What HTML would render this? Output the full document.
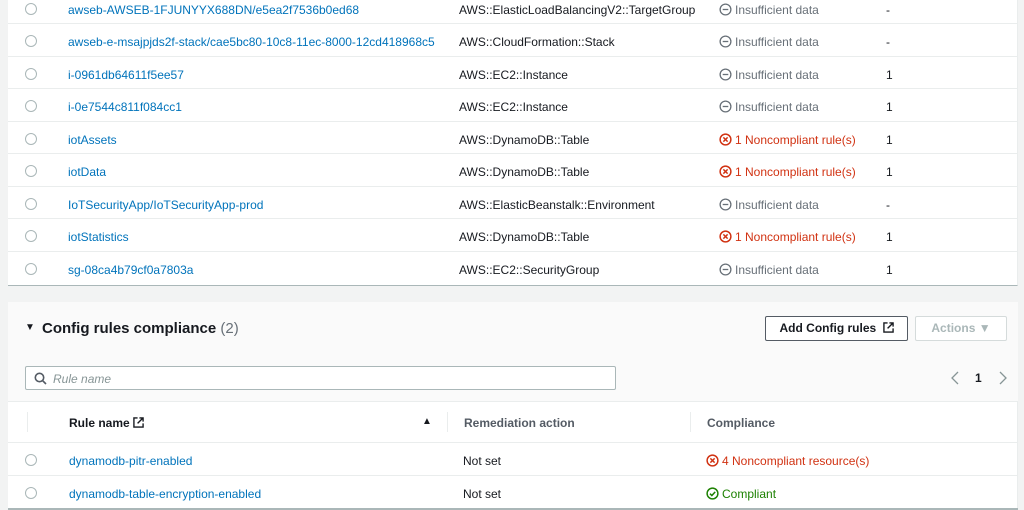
<!DOCTYPE html>
<html><head><meta charset="utf-8"><style>
*{box-sizing:border-box;margin:0;padding:0}
body{width:1024px;height:510px;overflow:hidden;background:#f2f3f3;font-family:"Liberation Sans",sans-serif;font-size:12px;color:#16191f;position:relative}
.p1{position:absolute;left:8px;top:-10px;width:1010px;height:296px;background:#fff;border-bottom:1px solid #aab7b8;border-right:1px solid #eaeded}
.row{position:absolute;left:0;width:1010px;height:32.5px;border-bottom:1px solid #eaeded}
.t{position:absolute;white-space:nowrap;line-height:14px}
.radio{position:absolute;width:12px;height:12px;border:1px solid #aab7b8;border-radius:50%;background:#fff}
.lk{color:#0073bb}
.gray{color:#687078}
.red{color:#d13212}
.green{color:#1d8102}
svg.i{width:13px;height:13px;vertical-align:-2px;margin-right:3px}
.p2{position:absolute;left:8px;top:302px;width:1010px;height:208px;background:#fff;border-right:1px solid #eaeded}
.hd{position:absolute;left:0;top:0;width:1010px;height:100px;background:#fafafa;border-bottom:1px solid #eaeded}
.btn{position:absolute;height:25px;border:1px solid #545b64;border-radius:2px;font-weight:bold;font-size:12px;text-align:center;line-height:23px;background:#fff}
</style></head><body>
<div class="p1"><div id="rows"></div></div>
<div class="p2">
<div class="hd">
<div class="t" style="left:17px;top:19px;font-size:10px">▼</div>
<div class="t" style="left:34px;top:18px;font-size:15px;font-weight:bold;line-height:18px">Config rules compliance <span style="font-weight:normal;color:#687078">(2)</span></div>
<div class="btn" style="left:757px;top:14px;width:143px;color:#16191f">Add Config rules <svg style="width:11px;height:11px;vertical-align:-1px;margin-left:3px" viewBox="0 0 12 12" fill="none" stroke="#16191f" stroke-width="1.5"><path d="M5 1H1v10h10V7M7 1h4v4M11 1L5 7"/></svg></div>
<div class="btn" style="left:907px;top:14px;width:92px;border-color:#d5dbdb;color:#aab7b8">Actions ▼</div>
<div style="position:absolute;left:17px;top:64px;width:591px;height:24px;border:1px solid #aab7b8;border-radius:2px;background:#fff">
<svg style="position:absolute;left:8px;top:5px;width:13px;height:13px" viewBox="0 0 13 13" fill="none" stroke="#545b64" stroke-width="1.6"><circle cx="5.5" cy="5.5" r="4.2"/><path d="M8.5 8.5L12 12"/></svg>
<div class="t" style="left:27px;top:5px;font-style:italic;color:#879596">Rule name</div></div>
<svg style="position:absolute;left:943px;top:69px;width:8px;height:14px" viewBox="0 0 8 14" fill="none" stroke="#879596" stroke-width="1.3"><path d="M7 1L1 7l6 6"/></svg>
<div class="t" style="left:967px;top:69px;font-weight:bold">1</div>
<svg style="position:absolute;left:991px;top:69px;width:8px;height:14px" viewBox="0 0 8 14" fill="none" stroke="#879596" stroke-width="1.3"><path d="M1 1l6 6-6 6"/></svg>
</div>
<div style="position:absolute;left:0;top:100px;width:1010px;height:41px;border-bottom:1px solid #eaeded">
<div style="position:absolute;left:19px;top:10px;width:1px;height:20px;background:#eaeded"></div>
<div style="position:absolute;left:439px;top:10px;width:1px;height:20px;background:#eaeded"></div>
<div style="position:absolute;left:682px;top:10px;width:1px;height:20px;background:#eaeded"></div>
<div class="t" style="left:61px;top:14px;font-weight:bold">Rule name <svg style="width:11px;height:11px;vertical-align:-1px" viewBox="0 0 12 12" fill="none" stroke="#16191f" stroke-width="1.5"><path d="M5 1H1v10h10V7M7 1h4v4M11 1L5 7"/></svg></div>
<div class="t" style="left:414px;top:13px;font-size:10px">▲</div>
<div class="t" style="left:456px;top:14px;font-weight:bold;color:#545b64">Remediation action</div>
<div class="t" style="left:699px;top:14px;font-weight:bold;color:#545b64">Compliance</div>
</div>
<div class="row" style="top:141px;height:33px">
<div class="radio" style="left:17px;top:11px"></div>
<div class="t lk" style="left:61px;top:11px">dynamodb-pitr-enabled</div>
<div class="t" style="left:455px;top:11px">Not set</div>
<div class="t red" style="left:698px;top:11px"><svg class="i" viewBox="0 0 14 14" fill="none" stroke="#d13212" stroke-width="1.6"><circle cx="7" cy="7" r="5.8"/><path d="M4.7 4.7l4.6 4.6M9.3 4.7L4.7 9.3"/></svg>4 Noncompliant resource(s)</div>
</div>
<div class="row" style="top:174px;height:33px">
<div class="radio" style="left:17px;top:11px"></div>
<div class="t lk" style="left:61px;top:11px">dynamodb-table-encryption-enabled</div>
<div class="t" style="left:455px;top:11px">Not set</div>
<div class="t green" style="left:698px;top:11px"><svg class="i" viewBox="0 0 14 14" fill="none" stroke="#1d8102" stroke-width="1.6"><circle cx="7" cy="7" r="5.8"/><path d="M4.3 7.2l2 2 3.6-4"/></svg>Compliant</div>
</div>
<div style="position:absolute;left:0;top:206px;width:1010px;height:2px;background:#aab7b8"></div>
</div>
<script>
var d=[["awseb-AWSEB-1FJUNYYX688DN/e5ea2f7536b0ed68","AWS::ElasticLoadBalancingV2::TargetGroup",0,"-"],
["awseb-e-msajpjds2f-stack/cae5bc80-10c8-11ec-8000-12cd418968c5","AWS::CloudFormation::Stack",0,"-"],
["i-0961db64611f5ee57","AWS::EC2::Instance",0,"1"],
["i-0e7544c811f084cc1","AWS::EC2::Instance",0,"1"],
["iotAssets","AWS::DynamoDB::Table",1,"1"],
["iotData","AWS::DynamoDB::Table",1,"1"],
["IoTSecurityApp/IoTSecurityApp-prod","AWS::ElasticBeanstalk::Environment",0,"-"],
["iotStatistics","AWS::DynamoDB::Table",1,"1"],
["sg-08ca4b79cf0a7803a","AWS::EC2::SecurityGroup",0,"1"]];
var X='<svg class="i" viewBox="0 0 14 14" fill="none" stroke="#d13212" stroke-width="1.6"><circle cx="7" cy="7" r="5.8"/><path d="M4.7 4.7l4.6 4.6M9.3 4.7L4.7 9.3"/></svg>';
var M='<svg class="i" viewBox="0 0 14 14" fill="none" stroke="#687078" stroke-width="1.4"><circle cx="7" cy="7" r="5.8"/><path d="M4 7h6"/></svg>';
var h="";
d.forEach(function(r,i){var top=i*32.5+1.5;
var st=r[2]?'<span class="red">'+X+'1 Noncompliant rule(s)</span>':'<span class="gray">'+M+'Insufficient data</span>';
h+='<div class="row" style="top:'+top+'px'+(i==8?';border-bottom:none':'')+'"><div class="radio" style="left:17px;top:11px"></div><div class="t lk" style="left:60px;top:11px">'+r[0]+'</div><div class="t" style="left:451px;top:11px">'+r[1]+'</div><div class="t" style="left:711px;top:11px">'+st+'</div><div class="t" style="left:878px;top:11px">'+r[3]+'</div></div>';});
document.getElementById("rows").innerHTML=h;
</script>
</body></html>
